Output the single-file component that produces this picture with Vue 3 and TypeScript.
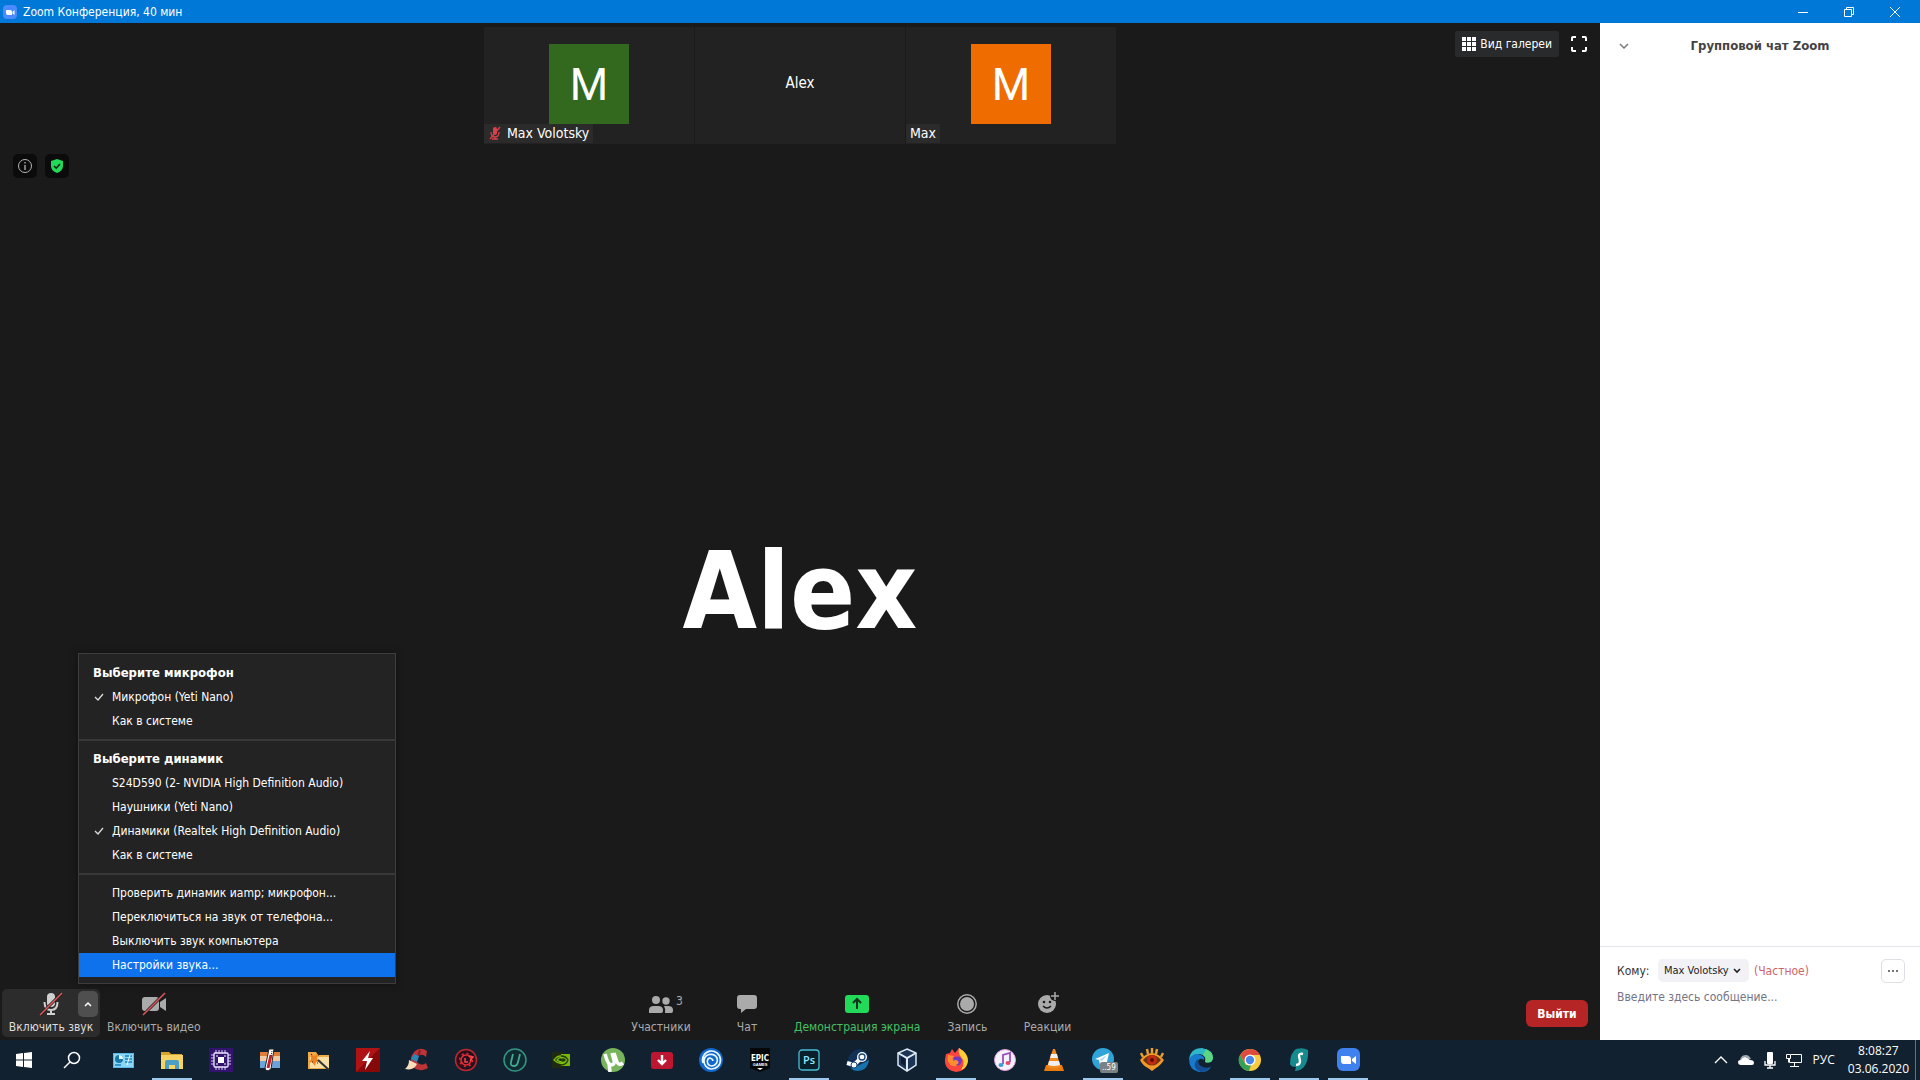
<script setup lang="ts">
import { ref } from 'vue'

interface MenuItem { label: string; checked?: boolean; active?: boolean }
interface MenuGroup { title?: string; items: MenuItem[] }
interface AppIcon { name: string; running?: boolean; badge?: string; art: string }

const recipient = ref('Max Volotsky')
const message = ref('')

const menu: MenuGroup[] = [
  {
    title: 'Выберите микрофон',
    items: [{ label: 'Микрофон (Yeti Nano)', checked: true }, { label: 'Как в системе' }],
  },
  {
    title: 'Выберите динамик',
    items: [
      { label: 'S24D590 (2- NVIDIA High Definition Audio)' },
      { label: 'Наушники (Yeti Nano)' },
      { label: 'Динамики (Realtek High Definition Audio)', checked: true },
      { label: 'Как в системе' },
    ],
  },
  {
    items: [
      { label: 'Проверить динамик иamp; микрофон...' },
      { label: 'Переключиться на звук от телефона...' },
      { label: 'Выключить звук компьютера' },
      { label: 'Настройки звука...', active: true },
    ],
  },
]

const apps: AppIcon[] = [
  { name: 'Система', art: '<rect x="2" y="5" width="21" height="15" fill="#58b9ea"/><rect x="3" y="6" width="19" height="13" fill="#8bd6f6"/><circle cx="8" cy="11" r="4" fill="#1976a8"/><path d="M8 11V7a4 4 0 0 1 4 4z" fill="#e8faff"/><path d="M14 8h7M14 11h7M14 14h7M4 17h6" stroke="#1782bd" stroke-width="1.4"/><path d="M16 17l3-10" stroke="#fff"/>' },
  { name: 'Проводник', running: true, art: '<path d="M1 4h8l2 2h11v5H1z" fill="#d9a52c"/><path d="M1 7h22v14H1z" fill="#f6d365"/><path d="M5 21v-7q0-2 2-2h10q2 0 2 2v7h-4v-4H9v4z" fill="#4b9fc4"/>' },
  { name: 'CPU', art: '<rect width="24" height="24" fill="#32146e"/><path d="M7 2v20M10 2v20M13 2v20M16 2v20M2 7h20M2 10h20M2 13h20M2 16h20" stroke="#d7c7fa" stroke-width="1"/><rect x="5" y="5" width="14" height="14" rx="1" fill="#32146e" stroke="#efe8ff" stroke-width="1.3"/><rect x="9" y="9" width="6" height="6" fill="#fff"/><path d="M7 8h2M15 8h2M7 16h2M15 16h2" stroke="#fff"/>' },
  { name: 'Температура', art: '<rect x="2" y="4" width="20" height="16" fill="#f2c9a2"/><path d="M2 4h8v4H2zM15 4h7v4h-7z" fill="#df7e38"/><path d="M2 13h20v7H2z" fill="#6ba4d8"/><path d="M11 1h5l-3 20q-5 4-6-1z" fill="#fff" stroke="#252525"/><path d="M13 7l-3 13" stroke="#c51e24" stroke-width="3"/><path d="M14 3l-1 5" stroke="#222" stroke-dasharray="1 1"/>' },
  { name: 'Папка', art: '<path d="M1 4h8l2 3h11v14H1z" fill="#efab47"/><path d="M3 9h19v11H3z" fill="#fae0a5"/><path d="M4 5l3 3 4-2-1 5 4 2-5 1-1 4-3-4-3 1 2-4z" fill="#ec8421"/><path d="M11 12l11 10" stroke="#333" stroke-width="2"/><path d="M4 6l1 1M11 7h1M5 14h1M10 15h1" stroke="#4c2100"/>' },
  { name: 'Молния', art: '<path d="M0 0h24v24H0z" fill="#850909"/><path d="M0 0h24L0 24z" fill="#b01315"/><path d="M14 3L6 13h5l-2 9 8-12h-5z" fill="#fff"/>' },
  { name: 'CCleaner', art: '<path d="M21 9q-4-4-8-1-3 4 0 7 4 3 8 0l2 5q-9 5-15-1-5-8 1-15Q15-2 22 3z" fill="#bc3435"/><path d="M13 9l2-7" stroke="#8a1c25" stroke-width="2"/><path d="M9 6l5 2-2 6-6-3z" fill="#2b86b9"/><path d="M4 12l8 4q-3 7-12 5 4-3 4-9z" fill="#f5dfbc"/>' },
  { name: 'Шестерня', art: '<circle cx="12" cy="12" r="10.5" fill="#2a101b" stroke="#be2830" stroke-width="1.5"/><circle cx="12" cy="12" r="5" fill="none" stroke="#e22d37" stroke-width="1.6"/><circle cx="12" cy="12" r="6.4" fill="none" stroke="#e22d37" stroke-width="1.6" stroke-dasharray="2 3"/><path d="M11 10v4h3M15 8l4 1-3 4" fill="none" stroke="#ff454c" stroke-width="1.5"/>' },
  { name: 'Uninstaller', art: '<circle cx="12" cy="12" r="11" fill="#102a31" stroke="#359583" stroke-width="1.5"/><path d="M10 6L8 14q-1 4 3 4 3 0 4-4l2-8" fill="none" stroke="#43a990" stroke-width="1.8"/>' },
  { name: 'NVIDIA', art: '<rect x="0" y="4" width="11" height="16" fill="#202a12"/><rect x="9" y="6" width="9" height="12" fill="#76b900"/><path d="M2 12q6-8 14 0-7 7-14 0zm3 0q4-5 9 0-4 4-9 0z" fill="none" stroke="#7bbd0a" stroke-width="1.3"/><path d="M9 8q5 0 7 4-2 5-7 5M9 12q2-2 4 0-2 2-4 0z" fill="none" stroke="#22350b" stroke-width="1.3"/>' },
  { name: 'uTorrent', art: '<circle cx="12" cy="12" r="12" fill="#77b45b"/><path d="M4 6q3 11 6 11 4 0 3-5l-2-7M13 5l3 9q2 4 6 1M8 15l1 9" fill="none" stroke="#fff" stroke-width="3.5"/>' },
  { name: 'Загрузчик', art: '<rect x="1" y="4" width="22" height="17" rx="3" fill="#bd1631"/><path d="M12 7v9M8 12l4 4 4-4" fill="none" stroke="#fff" stroke-width="2.4"/>' },
  { name: 'Ubisoft', art: '<circle cx="12" cy="12" r="12" fill="#1169cd"/><path d="M4 15a9 9 0 1 1 8 6a8 8 0 0 1-7-9a7 7 0 0 1 13-2a6 6 0 0 1-5 8a4.500 4.500 0 0 1-4-7a3 3 0 0 1 5 2" fill="none" stroke="#e9f7ff" stroke-width="1.7"/>' },
  { name: 'Epic Games', art: '<path d="M2 0h20v20l-10 4-10-4z" fill="#050709"/><text x="12" y="13" text-anchor="middle" font-family="DejaVu Sans Condensed" font-weight="700" font-size="8" fill="#fff">EPIC</text><text x="12" y="18" text-anchor="middle" font-family="Liberation Sans" font-weight="700" font-size="4" fill="#fff">GAMES</text><path d="M9 20h6l-3 2z" fill="#fff"/>' },
  { name: 'Photoshop', running: true, art: '<rect x="2" y="2" width="20" height="20" rx="3" fill="#07202b" stroke="#48bdd5" stroke-width="1.3"/><text x="12" y="16" text-anchor="middle" font-family="Open Sans" font-weight="600" font-size="11" fill="#8fe9ff">Ps</text>' },
  { name: 'Steam', art: '<path d="M1 15Q3 2 14 1q9 2 9 11-1 10-11 11-7 0-10-6z" fill="#123157"/><path d="M5 20q8-2 18-8-1 10-11 11-5 0-7-3z" fill="#1873ad"/><path d="M1 15l7 2 8-8" fill="none" stroke="#fff" stroke-width="4"/><circle cx="16" cy="9" r="5" fill="#fff"/><circle cx="16" cy="9" r="3" fill="#fff" stroke="#174677" stroke-width="1.3"/><circle cx="8" cy="17" r="3" fill="#fff" stroke="#174677"/>' },
  { name: 'VirtualBox', art: '<path d="M12 1l9 4v12l-9 6-9-6V5z" fill="#1c3555" stroke="#dce8f5" stroke-width="1.5"/><path d="M3 5l9 5 9-5M12 10v13" fill="none" stroke="#dce8f5" stroke-width="2"/><path d="M6 8l4 3v7l-4-3z" fill="#0c1b31"/>' },
  { name: 'Firefox', running: true, art: '<path d="M2 6l4-1 2-4 3 4 4-5q9 6 9 13-2 11-12 11Q0 22 1 11z" fill="#fb453f"/><path d="M15 0q9 5 9 13-1 7-7 9 5-8 0-13-3-3-2-9z" fill="#ffcd38"/><path d="M4 7l6 1-2 3q4-1 8 3-2 5-7 4-7-2-5-11z" fill="#ff8d32"/><path d="M10 9q7-2 8 3-1 7-7 5 5-1 3-4-2-2-5 0z" fill="#7438c5"/>' },
  { name: 'iTunes', art: '<circle cx="12" cy="12" r="10.5" fill="#f5f2fc" stroke="#e5a1d8"/><path d="M10 16V7l7-2v9" fill="none" stroke="#9a4fbe" stroke-width="1.8"/><ellipse cx="8" cy="17" rx="2.5" ry="2" fill="#3aa0d6"/><ellipse cx="15" cy="15" rx="2.5" ry="2" fill="#e74b72"/>' },
  { name: 'VLC', art: '<path d="M4 17h16l2 6H2z" fill="#ea7c0e"/><path d="M11 1h2l6 18q-7 3-14 0z" fill="#f18a20"/><path d="M9 6h6l1 4H8zM7 13h10l1 4q-6 2-12 0z" fill="#f2eee9"/>' },
  { name: 'Telegram', running: true, badge: '..59', art: '<circle cx="12" cy="11" r="11" fill="#30a4d9"/><path d="M4 11l14-6-3 13-4-3-2 2-1-5z" fill="#fff"/><path d="M8 12l8-5-5 6z" fill="#b2d8ec"/>' },
  { name: 'XnView', art: '<path d="M3 9L1 5M8 6L7 1M12 5V0M16 6l1-5M21 9l2-4" stroke="#efa02f" stroke-width="2.4"/><path d="M0 12Q12-2 24 12q-4 6-8 8l-4 3-4-3q-5-2-8-8z" fill="#f19a27"/><path d="M3 12q9-10 18 0-9 11-18 0z" fill="#69310f"/><circle cx="12" cy="12" r="5" fill="#c12c12"/><circle cx="12" cy="12" r="2" fill="#581009"/>' },
  { name: 'Edge', art: '<path d="M0 12Q1 0 13 0q11 2 11 10-1 6-8 4 2-6-5-8Q4 6 0 12z" fill="#30b7c7"/><path d="M17 1q7 3 7 9-1 6-8 4 2-5-2-7z" fill="#5bd784"/><path d="M0 11q5-7 12-4 4 2 3 5-4-3-6 1 0 6 7 7 3 1 6-1-4 6-12 5Q0 22 0 11z" fill="#167bcd"/><path d="M9 11q-1 6 5 8 5 2 8-1-4 6-10 6-8-3-6-9 1-3 3-4z" fill="#164d92"/>' },
  { name: 'Chrome', running: true, art: '<circle cx="12" cy="12" r="11" fill="#f9cb3e"/><path d="M2 7Q6 1 12 1q7 0 10 6H12l-5 8z" fill="#dd4b3e"/><path d="M2 7l6 10h5l-2 6Q4 22 2 17q-3-5 0-10z" fill="#35a156"/><circle cx="12" cy="12" r="5.5" fill="#fff"/><circle cx="12" cy="12" r="4.2" fill="#4688e8"/>' },
  { name: 'Surfshark', running: true, art: '<path d="M9 1q7-2 12 1 1 10-4 17-4 4-9 4l1-4q-5 0-6-3Q3 5 9 1z" fill="#178a8e"/><path d="M16 6q-4-1-4 2l1 5q0 4-4 4" fill="none" stroke="#fff" stroke-width="2.4"/>' },
  { name: 'Zoom', running: true, art: '<rect x="1" width="23" height="23" rx="6" fill="#3f82ef"/><path d="M5 8h7q3 0 3 3v5H8q-3 0-3-3zM16 11l4-3v8l-4-3z" fill="#fff"/>' },
]
</script>

<template>
  <div class="desktop">
    <header class="titlebar">
      <svg class="title-logo" viewBox="0 0 14 14"><rect width="14" height="14" rx="4" fill="#4a8cff" /><path d="M3 5h4q2 0 2 2v3H5q-2 0-2-2zM9.500 7l2-2v5l-2-1.500z" fill="#fff" /></svg>
      <h1>Zoom Конференция, 40 мин</h1>
      <div class="window-buttons">
        <button aria-label="Свернуть"><svg viewBox="0 0 12 12"><path d="M1 6.500h10" /></svg></button>
        <button aria-label="Восстановить"><svg viewBox="0 0 12 12"><path d="M1.500 3.500h7v7h-7zM3.500 3.500v-2h7v7h-2" /></svg></button>
        <button aria-label="Закрыть"><svg viewBox="0 0 12 12"><path d="M1 1l10 10M11 1L1 11" /></svg></button>
      </div>
    </header>

    <div class="workspace">
      <main class="stage">
        <div class="top">
          <div class="filmstrip">
            <div class="tile">
              <div class="avatar green">M</div>
              <div class="tag">
                <svg width="14" height="14" viewBox="0 0 14 14"><rect x="5" y="1" width="4" height="8" rx="2" fill="#d9404a" /><path d="M3 6q0 5 4 5t4-5M7 11v2M4 13h6M2 13L12 1" fill="none" stroke="#d9404a" stroke-width="1.300" /></svg>
                Max Volotsky
              </div>
            </div>
            <div class="tile"><span class="tile-name">Alex</span></div>
            <div class="tile">
              <div class="avatar orange">M</div>
              <div class="tag">Max</div>
            </div>
          </div>
          <div class="view-tools">
            <button class="gallery">
              <svg width="14" height="14" viewBox="0 0 14 14" fill="#fff"><path d="M0 0h4v4H0zM5 0h4v4H5zM10 0h4v4h-4zM0 5h4v4H0zM5 5h4v4H5zM10 5h4v4h-4zM0 10h4v4H0zM5 10h4v4H5zM10 10h4v4h-4z" /></svg>
              Вид галереи
            </button>
            <button class="fullscreen" aria-label="Полный экран"><svg width="16" height="16" viewBox="0 0 16 16"><path d="M1 5V2q0-1 1-1h3M11 1h3q1 0 1 1v3M15 11v3q0 1-1 1h-3M5 15H2q-1 0-1-1v-3" fill="none" stroke="#fff" stroke-width="2" /></svg></button>
          </div>
        </div>

        <div class="badges">
          <button aria-label="Сведения"><svg width="16" height="16" viewBox="0 0 16 16"><circle cx="8" cy="8" r="6.500" fill="none" stroke="#b5b5b5" /><path d="M8 7v5M8 4v1.500" stroke="#b5b5b5" stroke-width="1.300" /></svg></button>
          <button aria-label="Шифрование"><svg width="16" height="16" viewBox="0 0 16 16"><path d="M8 1l6 2v5q0 5-6 7-6-2-6-7V3z" fill="#23d959" /><path d="M5 8l2.200 2.200L11 6" fill="none" stroke="#0b2412" stroke-width="1.600" /></svg></button>
        </div>

        <div class="speaker">Alex</div>

        <div class="toolbar">
          <div class="left-tools">
            <div class="mute-group">
              <button class="tool mute">
                <svg width="24" height="24" viewBox="0 0 24 24"><rect x="8" y="1" width="8" height="14" rx="4" fill="#d0d0d0" /><path d="M5.500 10q0 8 6.500 8t6.500-8M12 18v4M8 22h8" fill="none" stroke="#d0d0d0" stroke-width="2" /><path d="M1 23L23 1" stroke="#1d1d1d" stroke-width="3" /><path d="M1 23L23 1" stroke="#e0575c" stroke-width="1.600" /></svg>
                <span>Включить звук</span>
              </button>
              <button class="caret" aria-label="Параметры звука"><svg width="8" height="8" viewBox="0 0 8 8"><path d="M1 6l3-3 3 3" fill="none" stroke="#fff" stroke-width="1.500" /></svg></button>
              <div class="audio-menu" role="menu">
                <section v-for="(group, i) in menu" :key="i">
                  <h2 v-if="group.title">{{ group.title }}</h2>
                  <button v-for="item in group.items" :key="item.label" role="menuitem" :class="{ active: item.active }">
                    <svg v-if="item.checked" width="10" height="8" viewBox="0 0 10 8"><path d="M1 4l3 3 5-6" fill="none" stroke="#ddd" stroke-width="1.300" /></svg>
                    {{ item.label }}
                  </button>
                </section>
              </div>
            </div>
            <button class="tool">
              <svg width="24" height="24" viewBox="0 0 24 24"><rect y="5" width="17" height="14" rx="3" fill="#aaa" /><path d="M18 10l6-4v13l-6-4z" fill="#aaa" /><path d="M1 23L23 1" stroke="#1a1a1a" stroke-width="3" /><path d="M1 23L23 1" stroke="#dc555a" stroke-width="1.600" /></svg>
              <span>Включить видео</span>
            </button>
          </div>
          <div class="center-tools">
            <button class="tool participants">
              <svg width="26" height="24" viewBox="0 0 26 24" fill="#aaa"><circle cx="8" cy="8" r="4" /><path d="M1 21v-3q0-4 5-4h4q5 0 5 4v1q0 2-2 2zM17 21q1-4-1-7h4q5 0 5 4v1q0 2-2 2z" /><circle cx="18" cy="9" r="3.700" /></svg>
              <span>Участники</span>
              <span class="count">3</span>
            </button>
            <button class="tool"><svg width="24" height="24" viewBox="0 0 24 24"><path d="M5 3h14q3 0 3 3v8q0 3-3 3h-8l-5 4v-4H5q-3 0-3-3V6q0-3 3-3z" fill="#aaa" /></svg><span>Чат</span></button>
            <button class="tool share"><svg width="24" height="24" viewBox="0 0 24 24"><rect y="3" width="24" height="18" rx="3" fill="#23d959" /><path d="M12 17V8M8 11l4-4 4 4" fill="none" stroke="#10331a" stroke-width="2" /></svg><span>Демонстрация экрана</span></button>
            <button class="tool"><svg width="24" height="24" viewBox="0 0 24 24"><circle cx="12" cy="12" r="9.200" fill="none" stroke="#aaa" stroke-width="1.500" /><circle cx="12" cy="12" r="7" fill="#aaa" /></svg><span>Запись</span></button>
            <button class="tool"><svg width="24" height="24" viewBox="0 0 24 24"><circle cx="12" cy="12" r="9" fill="#aaa" /><circle cx="20" cy="4" r="5" fill="#1a1a1a" /><path d="M20 0v8M16 4h8" stroke="#aaa" stroke-width="1.500" /><circle cx="9" cy="10" r="1.300" fill="#1a1a1a" /><circle cx="15" cy="10" r="1.300" fill="#1a1a1a" /><path d="M8 14q4 4 8 0" fill="none" stroke="#1a1a1a" stroke-width="1.500" /></svg><span>Реакции</span></button>
          </div>
          <button class="leave">Выйти</button>
        </div>
      </main>

      <aside class="chat">
        <header>
          <button aria-label="Свернуть чат"><svg width="10" height="8" viewBox="0 0 10 8"><path d="M1 2l4 4 4-4" fill="none" stroke="#777" stroke-width="1.500" /></svg></button>
          <h2>Групповой чат Zoom</h2>
        </header>
        <div class="messages"></div>
        <form class="composer" @submit.prevent>
          <div class="to-row">
            <label for="recipient">Кому:</label>
            <select id="recipient" v-model="recipient"><option>Max Volotsky</option></select>
            <span class="private">(Частное)</span>
            <button type="button" class="more" aria-label="Ещё"><i></i><i></i><i></i></button>
          </div>
          <textarea v-model="message" aria-label="Сообщение" placeholder="Введите здесь сообщение..."></textarea>
        </form>
      </aside>
    </div>

    <footer class="taskbar">
      <button class="start" aria-label="Пуск"><svg width="16" height="16" viewBox="0 0 16 16" fill="#fff"><path d="M0 2l7-1v6.500H0zM8 1l8-1v7.500H8zM0 8.500h7V15l-7-1zM8 8.500h8V16l-8-1z" /></svg></button>
      <button class="start" aria-label="Поиск"><svg width="18" height="18" viewBox="0 0 18 18"><circle cx="11" cy="7" r="5.500" fill="none" stroke="#fff" stroke-width="1.500" /><path d="M7 11l-6 6" stroke="#fff" stroke-width="1.500" /></svg></button>
      <nav>
        <button v-for="app in apps" :key="app.name" :aria-label="app.name" :class="{ running: app.running }">
          <svg width="24" height="24" viewBox="0 0 24 24" v-html="app.art"></svg>
          <span v-if="app.badge" class="app-badge">{{ app.badge }}</span>
        </button>
      </nav>
      <div class="tray">
        <svg width="14" height="16" viewBox="0 0 14 16"><path d="M1 11l6-6 6 6" fill="none" stroke="#fff" stroke-width="1.300" /></svg>
        <svg width="18" height="16" viewBox="0 0 18 16"><path d="M3 8q1-5 6-5 3 0 5 4z" fill="#9ba7b0" /><path d="M4 13q-3 0-3-3 0-2 3-2 2-4 6-2l3 2q4 0 4 3 0 2-2 2z" fill="#fff" /></svg>
        <svg width="12" height="18" viewBox="0 0 12 18"><rect x="3" y="1" width="6" height="12" rx="1" fill="#fff" /><path d="M1 10v4h10v-4M6 14v3M3 17h6" fill="none" stroke="#fff" stroke-width="1.300" /></svg>
        <svg width="18" height="16" viewBox="0 0 18 16" fill="none" stroke="#fff"><path d="M6 2.500h10.500v8H4.500V7M9.500 10.500v4M5 14.500h9M1.500 2.500h4v4h-4zM3.500 6.500v4" /></svg>
        <span class="lang">РУС</span>
        <time>8:08:27<br />03.06.2020</time>
      </div>
    </footer>
  </div>
</template>

<style>
body { margin: 0; background: #1a1a1a; }
</style>

<style scoped>
* { box-sizing: border-box; }
.desktop { display: flex; flex-direction: column; min-height: 100vh; font: 12px/16px "DejaVu Sans Condensed", "DejaVu Sans", sans-serif; color: #fff; }
button { margin: 0; padding: 0; border: 0; background: none; color: inherit; font: inherit; }
h1, h2 { margin: 0; font: inherit; }
svg { flex: none; display: block; }

.titlebar { display: flex; align-items: center; height: 23px; padding-left: 3px; gap: 6px; background: #0078d7; }
.title-logo { width: 14px; height: 14px; }
.titlebar h1 { flex: 1; }
.window-buttons { display: flex; padding-right: 2px; }
.window-buttons button { display: flex; align-items: center; justify-content: center; width: 46px; height: 20px; }
.window-buttons svg { width: 12px; height: 12px; fill: none; stroke: #fff; }

.workspace { flex: 1; display: flex; }
.stage { flex: 1; display: flex; flex-direction: column; background: #1a1a1a; }
.top { display: grid; grid-template-columns: 1fr auto 1fr; align-items: start; padding-top: 4px; }
.filmstrip { grid-column: 2; display: flex; gap: 1px; }
.tile { position: relative; display: flex; justify-content: center; align-items: center; width: 210px; height: 117px; background: #222; }
.tile-name { padding-bottom: 5px; font-size: 15px; }
.avatar { width: 80px; height: 80px; margin-bottom: 3px; font: 44px/82px Roboto, sans-serif; text-align: center; }
.green { background: #33691e; }
.orange { background: #ef6c00; }
.tag { position: absolute; left: 0; bottom: 1px; display: flex; align-items: center; gap: 5px; height: 19px; padding: 0 4px 1px; background: #2b2b2b; font-size: 14px; }
.view-tools { display: flex; justify-content: flex-end; align-items: center; gap: 12px; padding: 4px 13px 0 0; }
.gallery { display: flex; align-items: center; gap: 4px; height: 26px; padding: 0 7px 1px; border-radius: 2px; background: #292a2b; }

.badges { display: flex; gap: 8px; padding: 10px 13px 0; }
.badges button { display: flex; align-items: center; justify-content: center; width: 24px; height: 24px; border-radius: 5px; background: #0b0b0b; }
.speaker { flex: 1; display: flex; align-items: center; justify-content: center; padding-top: 20px; font-size: 107px; line-height: 1; font-weight: 700; }

.toolbar { display: grid; grid-template-columns: 6fr auto 5fr; align-items: start; height: 55px; padding-top: 4px; color: #aaa; }
.left-tools { display: flex; padding-left: 2px; }
.mute-group { position: relative; }
.tool { position: relative; display: flex; flex-direction: column; align-items: center; gap: 3px; min-width: 80px; height: 48px; padding: 3px 7px 0; white-space: nowrap; }
.tool svg { height: 24px; }
.mute { width: 98px; border-radius: 5px; background: #2c2c2c; color: #ddd; }
.caret { position: absolute; right: 2px; top: 2px; display: flex; align-items: center; justify-content: center; width: 20px; height: 26px; border-radius: 5px; background: #4f4f4f; }
.center-tools { display: flex; }
.participants { min-width: 92px; }
.count { position: absolute; left: 61px; top: 4px; }
.share { color: #45c065; }
.leave { justify-self: end; width: 62px; height: 27px; margin: 11px 12px 0 0; border-radius: 6px; background: #b52526; color: #fff; font-weight: 700; }

.audio-menu { position: absolute; left: 76px; bottom: 53px; width: 318px; padding: 7px 0 6px; border: 1px solid #3d3d3d; background: #232323; color: #fff; box-shadow: 0 0 6px #111; }
.audio-menu section + section { margin-top: 6px; padding-top: 6px; border-top: 2px solid #383838; }
.audio-menu h2 { padding: 0 14px; font-size: 13px; font-weight: 700; line-height: 24px; }
.audio-menu button { position: relative; display: block; width: 100%; padding: 0 33px; line-height: 24px; text-align: left; white-space: nowrap; }
.audio-menu button svg { position: absolute; left: 15px; top: 8px; }
.audio-menu .active { background: #0e72ed; }

.chat { display: flex; flex-direction: column; width: 320px; background: #fff; color: #333; }
.chat header { display: grid; grid-template-columns: 20px 1fr 20px; align-items: center; height: 45px; padding: 0 19px; text-align: center; }
.chat h2 { color: #444; font-size: 13px; font-weight: 700; }
.messages { flex: 1; }
.composer { height: 94px; padding: 11px 15px 0 17px; border-top: 1px solid #e4e4ea; }
.to-row { display: flex; align-items: center; height: 25px; }
.to-row label { width: 41px; }
.to-row select { height: 23px; padding: 0 20px 0 6px; border: 0; border-radius: 5px; appearance: none; color: #222; font: 11px/16px "DejaVu Sans Condensed", sans-serif; background: #f1f1f6 url("data:image/svg+xml,%3Csvg xmlns='http://www.w3.org/2000/svg' width='8' height='8'%3E%3Cpath d='M1 2l3 3 3-3' fill='none' stroke='%23222' stroke-width='1.6'/%3E%3C/svg%3E") no-repeat right 8px center; }
.private { margin-left: 5px; color: #cf6468; }
.more { display: flex; align-items: center; justify-content: center; gap: 2px; width: 24px; height: 24px; margin-left: auto; border: 1px solid #dedee4; border-radius: 5px; }
.more i { width: 2px; height: 2px; background: #777; }
textarea { display: block; width: 100%; height: 40px; margin-top: 4px; padding: 0; border: 0; outline: 0; resize: none; background: none; color: #333; font: inherit; line-height: 20px; }
textarea::placeholder { color: #747487; opacity: 1; }

.taskbar { display: flex; height: 40px; background: #11212f; }
.start { display: flex; align-items: center; justify-content: center; width: 48px; }
.taskbar nav { flex: 1; display: flex; padding-left: 2px; }
.taskbar nav button { position: relative; display: flex; align-items: center; justify-content: center; width: 49px; }
.running::after { content: ""; position: absolute; left: 5px; right: 4px; bottom: 0; height: 2px; background: #9cc9ed; }
.app-badge { position: absolute; left: 22px; top: 22px; padding: 0 2px; border-radius: 2px; background: #7b8286; font-size: 8px; line-height: 11px; }
.tray { display: flex; align-items: center; gap: 9px; margin-right: 4px; padding-right: 6px; border-right: 1px solid #63717c; font: 12px/18px "Open Sans", sans-serif; }
.lang { margin: 0 4px 0 1px; }
time { text-align: center; }
</style>
